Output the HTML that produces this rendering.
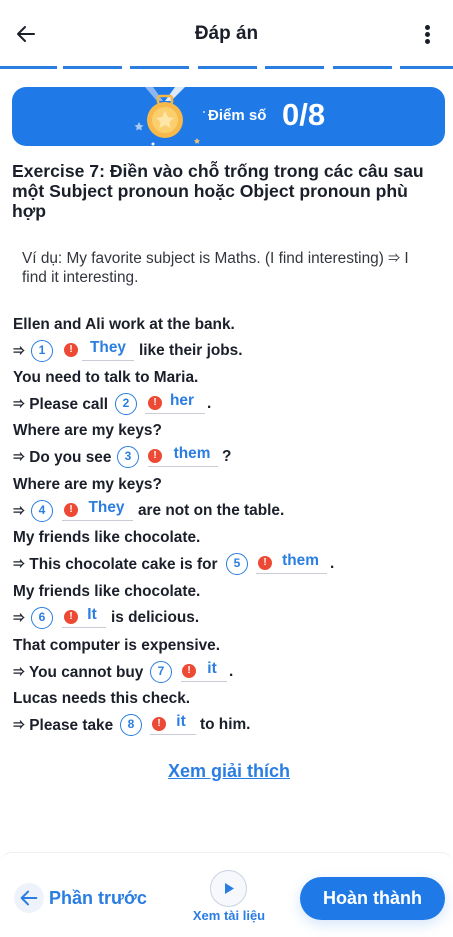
<!DOCTYPE html>
<html><head><meta charset="utf-8"><style>
*{margin:0;padding:0;box-sizing:border-box}
body{width:453px;height:937px;position:relative;background:#fff;font-family:"Liberation Sans","Noto Sans CJK SC",sans-serif;color:#1b1f2a;overflow:hidden}
.a{position:absolute;white-space:nowrap}
.t{font-weight:bold;font-size:15.4px;line-height:18px}
.ar{font-size:12px;display:inline-block;vertical-align:1px}
.c{position:absolute;width:22px;height:22px;border:1.5px solid #2a7de1;border-radius:50%;color:#2a7de1;font-size:12px;font-weight:bold;text-align:center;line-height:19px}
.x{position:absolute;width:14px;height:14px;border-radius:50%;background:#ec4a35;color:#fff;font-size:10px;font-weight:bold;text-align:center;line-height:14px}
.ans{position:absolute;color:#2a7de1;font-weight:bold;font-size:15.4px;text-align:center;border-bottom:1.5px solid #c9ccd4;height:21px;line-height:16px}
.dash{position:absolute;top:66px;height:3px;background:#2a7de1;width:59px}
</style></head><body>
<svg class="a" style="left:14px;top:22px" width="24" height="24" viewBox="0 0 24 24"><path d="M20 12H5M11 5l-7 7 7 7" fill="none" stroke="#1b1f2a" stroke-width="2" stroke-linecap="round" stroke-linejoin="round"/></svg>
<div class="a" style="left:0;width:453px;text-align:center;top:23px;font-size:19px;font-weight:bold">Đáp án</div>
<div class="a" style="left:425px;top:25px;width:5px;height:5px;border-radius:50%;background:#1b1f2a"></div>
<div class="a" style="left:425px;top:32px;width:5px;height:5px;border-radius:50%;background:#1b1f2a"></div>
<div class="a" style="left:425px;top:39px;width:5px;height:5px;border-radius:50%;background:#1b1f2a"></div>
<div class="dash" style="left:0;width:57px"></div><div class="dash" style="left:63px"></div><div class="dash" style="left:130px"></div><div class="dash" style="left:198px"></div><div class="dash" style="left:265px"></div><div class="dash" style="left:333px"></div><div class="dash" style="left:400px;width:53px"></div>
<div class="a" style="left:12px;top:87px;width:433px;height:59px;border-radius:14px;background:#1f7ae8;overflow:hidden">
<svg class="a" style="left:115px;top:0" width="80" height="59" viewBox="0 0 80 59"><path d="M18 0l12 14h6L26 0z" fill="#8fb6f0"/><path d="M48 0L38 14h6L58 0z" fill="#dde8f8"/><rect x="31" y="9" width="14" height="8" rx="2" fill="none" stroke="#f0b646" stroke-width="2.5"/><circle cx="38" cy="33" r="18" fill="#f6b94a"/><circle cx="38" cy="33" r="13" fill="#fbcf6e"/><path d="M38 24l3 6 6 1-4.5 4 1 6-5.5-3-5.5 3 1-6-4.5-4 6-1z" fill="#fde6a8"/><path d="M12 35l1.5 3 3 .5-2.3 2 .6 3-2.8-1.5-2.8 1.5.6-3-2.3-2 3-.5z" fill="#a9c8f3"/><circle cx="77" cy="25" r="1" fill="#cfe0f8"/><circle cx="26" cy="57" r="1.5" fill="#fff"/><path d="M70 51l1 2 2 .3-1.5 1.4.4 2-1.9-1-1.9 1 .4-2-1.5-1.4 2-.3z" fill="#f0c676"/></svg>
<div class="a" style="left:196px;top:20px;color:#fff;font-weight:bold;font-size:15px">Điểm số</div>
<div class="a" style="left:270px;top:10px;color:#fff;font-weight:bold;font-size:31px">0/8</div>
</div>
<div class="a" style="left:12px;top:161px;font-size:17.6px;font-weight:bold;line-height:20px;white-space:normal;width:440px">Exercise 7: Điền vào chỗ trống trong các câu sau<br>một Subject pronoun hoặc Object pronoun phù<br>hợp</div>
<div class="a" style="left:22px;top:249px;font-size:15.4px;line-height:19px;color:#33363d">Ví dụ: My favorite subject is Maths. (I find interesting) <span class="ar">⇒</span> I<br>find it interesting.</div>

<div class="a t" style="left:13px;top:316px">Ellen and Ali work at the bank.</div>
<div class="a t" style="left:13px;top:342px"><span class="ar">⇒</span></div><div class="c" style="left:31px;top:340px">1</div><div class="x" style="left:64px;top:343px">!</div><div class="ans" style="left:82px;top:340px;width:52px">They</div><div class="a t" style="left:139px;top:342px">like their jobs.</div>

<div class="a t" style="left:13px;top:369px">You need to talk to Maria.</div>
<div class="a t" style="left:13px;top:395px"><span class="ar">⇒</span> Please call</div><div class="c" style="left:115px;top:393px">2</div><div class="x" style="left:148px;top:396px">!</div><div class="ans" style="left:145px;top:393px;width:60px;padding-left:14px">her</div><div class="a t" style="left:207px;top:395px">.</div>

<div class="a t" style="left:13px;top:422px">Where are my keys?</div>
<div class="a t" style="left:13px;top:448px"><span class="ar">⇒</span> Do you see</div><div class="c" style="left:117px;top:446px">3</div><div class="x" style="left:148px;top:449px">!</div><div class="ans" style="left:148px;top:446px;width:70px;padding-left:18px">them</div><div class="a t" style="left:222px;top:448px">?</div>

<div class="a t" style="left:13px;top:476px">Where are my keys?</div>
<div class="a t" style="left:13px;top:502px"><span class="ar">⇒</span></div><div class="c" style="left:31px;top:500px">4</div><div class="x" style="left:64px;top:503px">!</div><div class="ans" style="left:62px;top:500px;width:71px;padding-left:18px">They</div><div class="a t" style="left:138px;top:502px">are not on the table.</div>

<div class="a t" style="left:13px;top:529px">My friends like chocolate.</div>
<div class="a t" style="left:13px;top:555px"><span class="ar">⇒</span> This chocolate cake is for</div><div class="c" style="left:226px;top:553px">5</div><div class="x" style="left:258px;top:556px">!</div><div class="ans" style="left:256px;top:553px;width:71px;padding-left:18px">them</div><div class="a t" style="left:330px;top:555px">.</div>

<div class="a t" style="left:13px;top:583px">My friends like chocolate.</div>
<div class="a t" style="left:13px;top:609px"><span class="ar">⇒</span></div><div class="c" style="left:31px;top:607px">6</div><div class="x" style="left:64px;top:610px">!</div><div class="ans" style="left:62px;top:607px;width:44px;padding-left:16px">It</div><div class="a t" style="left:111px;top:609px">is delicious.</div>

<div class="a t" style="left:13px;top:637px">That computer is expensive.</div>
<div class="a t" style="left:13px;top:663px"><span class="ar">⇒</span> You cannot buy</div><div class="c" style="left:150px;top:661px">7</div><div class="x" style="left:182px;top:664px">!</div><div class="ans" style="left:181px;top:661px;width:46px;padding-left:16px">it</div><div class="a t" style="left:229px;top:663px">.</div>

<div class="a t" style="left:13px;top:690px">Lucas needs this check.</div>
<div class="a t" style="left:13px;top:716px"><span class="ar">⇒</span> Please take</div><div class="c" style="left:120px;top:714px">8</div><div class="x" style="left:152px;top:717px">!</div><div class="ans" style="left:150px;top:714px;width:46px;padding-left:16px">it</div><div class="a t" style="left:200px;top:716px">to him.</div>

<div class="a" style="left:0;width:458px;text-align:center;top:761px;font-size:18px;font-weight:bold;color:#2a7de1;text-decoration:underline">Xem giải thích</div>

<div class="a" style="left:0;top:852px;width:453px;height:85px;border-top:1px solid #eef0f3;border-radius:12px 12px 0 0;background:#fff"></div>
<div class="a" style="left:14px;top:883px;width:30px;height:30px;border-radius:50%;background:#eef3fb"></div>
<svg class="a" style="left:18px;top:887px" width="22" height="22" viewBox="0 0 24 24"><path d="M20 12H5M11 5l-7 7 7 7" fill="none" stroke="#2a7de1" stroke-width="2.2" stroke-linecap="round" stroke-linejoin="round"/></svg>
<div class="a" style="left:49px;top:888px;font-size:18px;font-weight:bold;color:#2a7de1">Phần trước</div>
<div class="a" style="left:210px;top:870px;width:37px;height:37px;border-radius:50%;border:1px solid #c9d3e3;background:#f6f8fc"></div>
<svg class="a" style="left:223px;top:882px" width="12" height="13" viewBox="0 0 12 13"><path d="M2 1l9 5.5L2 12z" fill="#2a7de1"/></svg>
<div class="a" style="left:0;width:458px;text-align:center;top:908px;font-size:13px;font-weight:bold;color:#2a7de1">Xem tài liệu</div>
<div class="a" style="left:300px;top:877px;width:145px;height:43px;border-radius:22px;background:#1f7ae8;color:#fff;font-size:18px;font-weight:bold;text-align:center;line-height:43px;box-shadow:0 4px 14px rgba(31,122,232,.2)">Hoàn thành</div>
</body></html>
